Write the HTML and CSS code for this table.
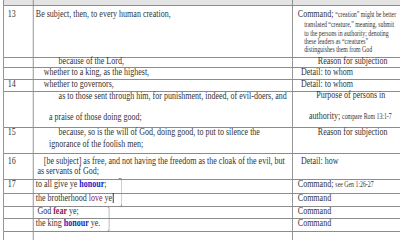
FILE: index.html
```html
<!DOCTYPE html>
<html>
<head>
<meta charset="utf-8">
<link rel="stylesheet" href="styles.css">
</head>
<body>
<div class="sheet">
  <div class="row head"><div class="c"></div><div class="c"></div><div class="c"></div></div>

  <div class="row h52">
    <div class="c n"><div class="ln pt3">13</div></div>
    <div class="c"><div class="ln pt3 i2">Be subject, then, to every human creation,</div></div>
    <div class="c">
      <div class="ln pt3 first i6"><span>Command;</span> <span class="sm">“creation” might be better</span></div>
      <div class="ln sm i14">translated “creature,” meaning, submit</div>
      <div class="ln sm i14">to the persons in authority; denoting</div>
      <div class="ln sm i14">these leaders as “creatures”</div>
      <div class="ln sm i14">distinguishes them from God</div>
    </div>
  </div>

  <div class="row h10">
    <div class="c n"></div>
    <div class="c"><div class="ln up2 i31">because of the Lord,</div></div>
    <div class="c"><div class="ln up2 i31">Reason for subjection</div></div>
  </div>

  <div class="row h12">
    <div class="c n"></div>
    <div class="c"><div class="ln up1 i12">whether to a king, as the highest,</div></div>
    <div class="c"><div class="ln up1 i10">Detail: to whom</div></div>
  </div>

  <div class="row h12">
    <div class="c n"><div class="ln up1">14</div></div>
    <div class="c"><div class="ln up1 i12">whether to governors,</div></div>
    <div class="c"><div class="ln up1 i10">Detail: to whom</div></div>
  </div>

  <div class="row h36">
    <div class="c n"></div>
    <div class="c">
      <div class="ln up1 i31">as to those sent through him, for punishment, indeed, of evil-doers, and</div>
      <div class="ln gap11 i19">a praise of those doing good;</div>
    </div>
    <div class="c">
      <div class="ln up2 i29">Purpose of persons in</div>
      <div class="ln gap11 i20">authority; <span class="sm">compare Rom 13:1-7</span></div>
    </div>
  </div>

  <div class="row h26">
    <div class="c n"><div class="ln up1">15</div></div>
    <div class="c">
      <div class="ln up1 i31">because, so is the will of God, doing good, to put to silence the</div>
      <div class="ln gap2 i19">ignorance of the foolish men;</div>
    </div>
    <div class="c"><div class="ln up1 i31">Reason for subjection</div></div>
  </div>

  <div class="row h26">
    <div class="c n"><div class="ln pt2">16</div></div>
    <div class="c">
      <div class="ln pt2 i12">[be subject] as free, and not having the freedom as the cloak of the evil, but</div>
      <div class="ln i4">as servants of God;</div>
    </div>
    <div class="c"><div class="ln pt2 i10">Detail: how</div></div>
  </div>

  <div class="row h14">
    <div class="c n"><div class="ln up1">17</div></div>
    <div class="c"><div class="ln up1 i2">to all give ye <span class="hon">honour</span>;</div></div>
    <div class="c"><div class="ln up1 i6">Command; <span class="sm">see Gen 1:26-27</span></div></div>
  </div>

  <div class="row h13">
    <div class="c n"></div>
    <div class="c"><div class="ln up1 i2">the brotherhood <span class="lov">love</span> ye<span class="caret"></span></div></div>
    <div class="c"><div class="ln up1 i6">Command</div></div>
  </div>

  <div class="row h12">
    <div class="c n"></div>
    <div class="c"><div class="ln up1 i4">God <span class="fea">fear</span> ye;</div></div>
    <div class="c"><div class="ln up1 i6">Command</div></div>
  </div>

  <div class="row h13">
    <div class="c n"></div>
    <div class="c"><div class="ln up1 i2">the king <span class="hon">honour</span> ye.</div></div>
    <div class="c"><div class="ln up1 i6">Command</div></div>
  </div>

  <div class="row h18">
    <div class="c n"></div>
    <div class="c"></div>
    <div class="c"></div>
  </div>

  <div class="bracket b1"></div>
  <div class="bracket b2"></div>
</div>
</body>
</html>
```

FILE: styles.css
```css
html, body {
  margin: 0;
  padding: 0;
  background: #ffffff;
  overflow: hidden;
}

.sheet {
  position: relative;
  width: 500px;
  box-sizing: border-box;
  padding-left: 3.75px;
  transform: scaleX(0.8);
  transform-origin: 0 0;
  font-family: "Liberation Serif", "Times New Roman", serif;
  font-size: 10px;
  line-height: 10px;
  color: #333333;
}

.row {
  display: grid;
  grid-template-columns: 37.5px 324px 134.75px;
  box-sizing: border-box;
  border-bottom: 1px solid #8c8c8c;
}

.head { height: 6px; background: #e4e4e4; }
.h52 { height: 52px; }
.h36 { height: 36px; }
.h26 { height: 26px; }
.h18 { height: 18px; }
.h14 { height: 14px; }
.h13 { height: 13px; }
.h12 { height: 12px; }
.h10 { height: 10px; }

.c {
  border-left: 1px solid #7c7c7c;
  white-space: nowrap;
}

.n .ln { padding-left: 5px; }

.ln { display: block; }

.pt3 { padding-top: 3px; }
.pt2 { padding-top: 2px; }
.up1 { margin-top: -1px; }
.up2 { margin-top: -2px; }
.gap11 { margin-top: 11px; }
.gap2 { margin-top: 2px; }

.first { margin-bottom: 2px; }

.i2 { padding-left: 2.5px; }
.i4 { padding-left: 4.5px; }
.i6 { padding-left: 6px; }
.i10 { padding-left: 10px; }
.i12 { padding-left: 12.5px; }
.i14 { padding-left: 14px; }
.i19 { padding-left: 19px; }
.i20 { padding-left: 20px; }
.i29 { padding-left: 29px; }
.i31 { padding-left: 31px; }

.sm {
  font-size: 7.3px;
  line-height: 8.3px;
}

.hon {
  color: #2020c8;
  font-weight: bold;
}

.lov {
  color: #8a1848;
}

.fea {
  color: #8a1848;
  font-weight: bold;
}

.caret {
  display: inline-block;
  width: 0;
  height: 10px;
  margin-left: 1px;
  border-left: 1.25px solid #111111;
  vertical-align: -2px;
}

.bracket {
  position: absolute;
  width: 4px;
  border: 1px solid #8a8a8a;
  border-left: none;
  border-radius: 0 3px 3px 0;
}

.b1 { left: 147.5px; top: 178px; height: 27px; }
.b2 { left: 132px; top: 206px; height: 24px; }
```
